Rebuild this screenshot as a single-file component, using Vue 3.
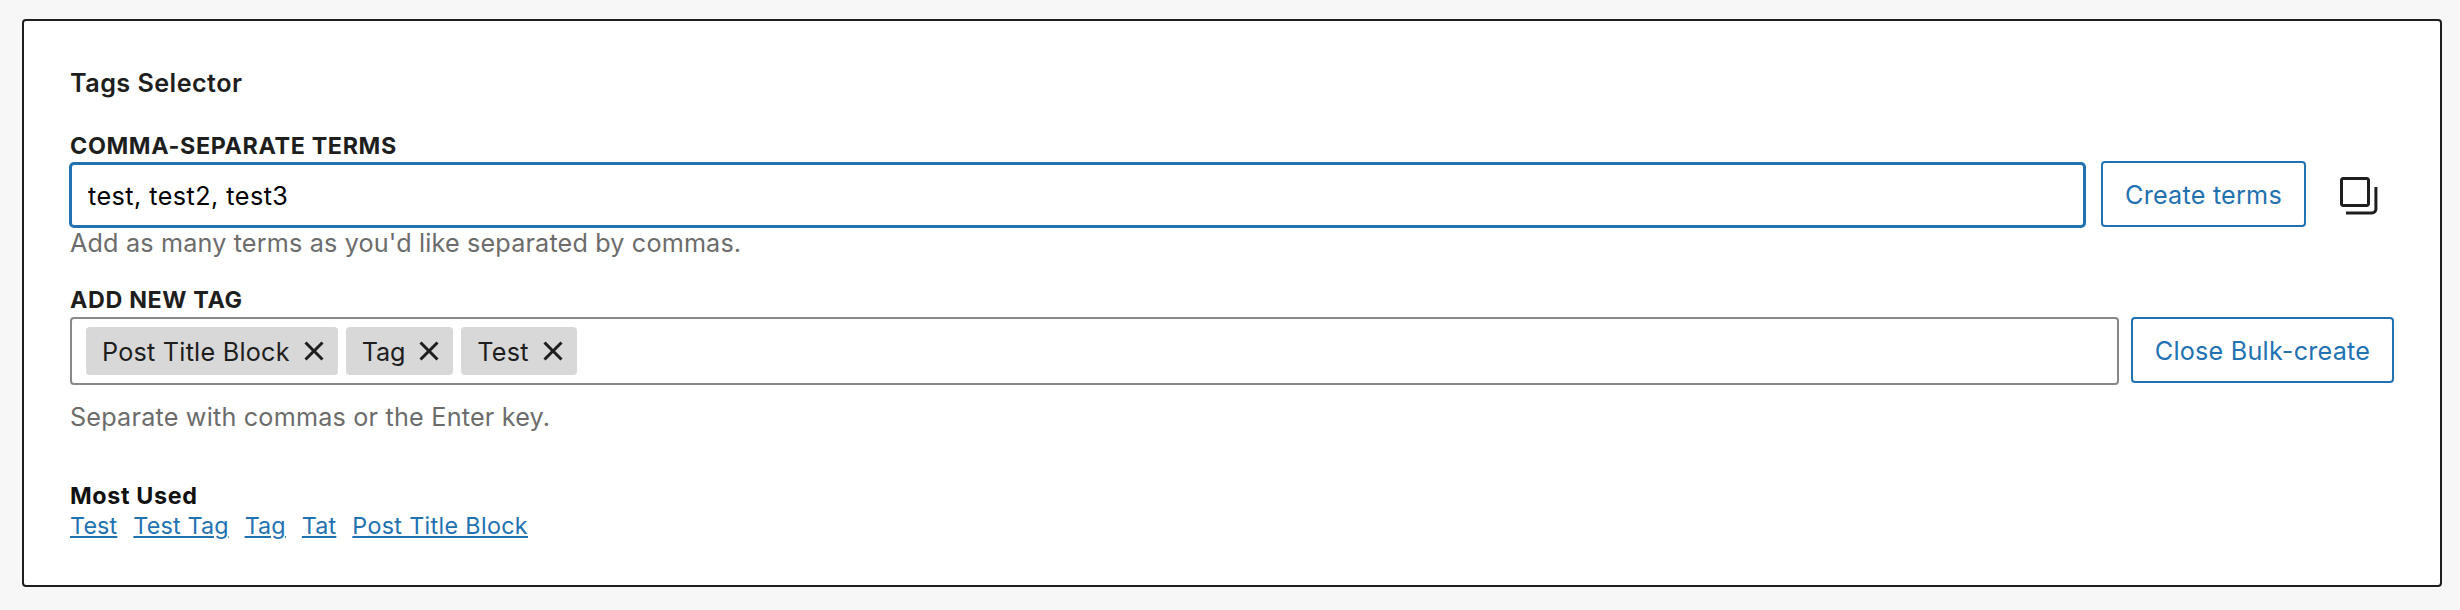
<script setup>
import { ref } from 'vue'

const terms = ref('test, test2, test3')
const tags = ref(['Post Title Block', 'Tag', 'Test'])
const mostUsed = ['Test', 'Test Tag', 'Tag', 'Tat', 'Post Title Block']
</script>

<template>
  <div class="page">
    <section class="card">
      <h2 class="title">Tags Selector</h2>

      <div class="label first">Comma-separate terms</div>
      <div class="row bulk">
        <div class="field focused"><span class="value">{{ terms }}</span></div>
        <button class="button create" type="button">Create terms</button>
        <svg class="copy" viewBox="0 0 24 24">
          <path d="M20.2 8v11c0 .7-.6 1.2-1.2 1.2H6v1.5h13c1.5 0 2.7-1.2 2.7-2.8V8zM18 16.4V4.6c0-.9-.7-1.6-1.6-1.6H4.6C3.7 3 3 3.7 3 4.6v11.8c0 .9.7 1.6 1.6 1.6h11.8c.9 0 1.6-.7 1.6-1.6zM4.5 4.6c0-.1.1-.1.1-.1h11.8c.1 0 .1.1.1.1v11.8c0 .1-.1.1-.1.1H4.6l-.1-.1V4.6z" />
        </svg>
      </div>
      <p class="help many"><span>Add as many terms as you'd like separated by commas.</span></p>

      <div class="label second">Add new tag</div>
      <div class="row tags">
        <div class="field tokens">
          <span v-for="tag in tags" :key="tag" class="token">
            <span class="token-text">{{ tag }}</span>
            <svg class="remove" viewBox="0 0 24 24">
              <path d="M12 13.06l3.712 3.713 1.061-1.06L13.061 12l3.712-3.712-1.06-1.06L12 10.938 8.288 7.227l-1.061 1.06L10.939 12l-3.712 3.712 1.06 1.061L12 13.061z" />
            </svg>
          </span>
        </div>
        <button class="button close" type="button">Close Bulk-create</button>
      </div>
      <p class="help enter"><span>Separate with commas or the Enter key.</span></p>

      <h3 class="most">Most Used</h3>
      <div class="links">
        <a v-for="item in mostUsed" :key="item" class="link">{{ item }}</a>
      </div>
    </section>
  </div>
</template>

<style>
body {
  margin: 0;
  background: #f7f7f7;
}
</style>

<style scoped>
.page {
  box-sizing: border-box;
  width: 2460px;
  height: 610px;
  padding: 19px 18px 23px 22px;
  background: #f7f7f7;
  font-family: Inter, "Liberation Sans", sans-serif;
  font-size: 25.2px;
  line-height: 32px;
  color: #1e1e1e;
  white-space: nowrap;
}
.card {
  box-sizing: border-box;
  height: 568px;
  padding: 46px;
  background: #fff;
  border: 2px solid #1e1e1e;
  border-radius: 4px;
}
.title {
  margin: 0;
  font-size: 25.2px;
  font-weight: 600;
  letter-spacing: 0.45px;
}
.label {
  font-size: 23.3px;
  font-weight: 700;
  line-height: 28px;
  letter-spacing: 0.65px;
  text-transform: uppercase;
}
.first { margin-top: 33px; }
.second { margin-top: 27px; }
.row {
  display: flex;
  align-items: flex-start;
}
.bulk { margin-top: 1px; height: 67px; }
.tags { margin-top: 3px; height: 68px; gap: 12px; }
.field {
  box-sizing: border-box;
  flex: 1;
  display: flex;
  align-items: center;
  border-radius: 4px;
  background: #fff;
}
.focused {
  height: 66px;
  margin: 1px 15px 0 -1px;
  padding: 2px 16px 0;
  border: 3px solid #2271b1;
  border-radius: 5px;
  color: #000;
  letter-spacing: 0.45px;
}
.tokens {
  height: 68px;
  padding: 0 14px;
  gap: 8px;
  border: 2px solid #888;
}
.token {
  display: flex;
  height: 48px;
  padding-left: 16px;
  background: #d8d8d8;
  border-radius: 4px;
  line-height: 50px;
}
.token:nth-child(1) { letter-spacing: 0.23px; }
.token:nth-child(2) { letter-spacing: -0.2px; }
.token:nth-child(3) { letter-spacing: 0.3px; }
.remove, .copy {
  display: block;
  flex: none;
  width: 48px;
  height: 48px;
  fill: #1e1e1e;
}
.copy { margin: 10px 12px 0 28px; }
.button {
  box-sizing: border-box;
  flex: none;
  height: 66px;
  padding: 2px 0 0;
  border: 2px solid #2271b1;
  border-radius: 4px;
  background: transparent;
  color: #2271b1;
  font: inherit;
  line-height: 60px;
  letter-spacing: 0.22px;
  text-align: center;
}
.create { width: 205px; }
.close { width: 263px; }
.help {
  margin: 0;
  color: #6c6c6c;
  letter-spacing: 0.16px;
}
.many { margin-top: -1px; }
.enter { margin-top: 16px; letter-spacing: 0.2px; }
.most {
  margin: 49px 0 0;
  font-size: 23.3px;
  font-weight: 700;
  line-height: 28px;
  letter-spacing: 0.65px;
  color: #111;
}
.links {
  display: flex;
  gap: 16px;
  margin-top: 2px;
  font-size: 23.3px;
  line-height: 28px;
  letter-spacing: 0.16px;
  color: #2271b1;
}
.link {
  text-decoration: underline;
  text-decoration-thickness: 2px;
  text-underline-offset: 2px;
}
.link:last-child { letter-spacing: 0.34px; }
</style>
